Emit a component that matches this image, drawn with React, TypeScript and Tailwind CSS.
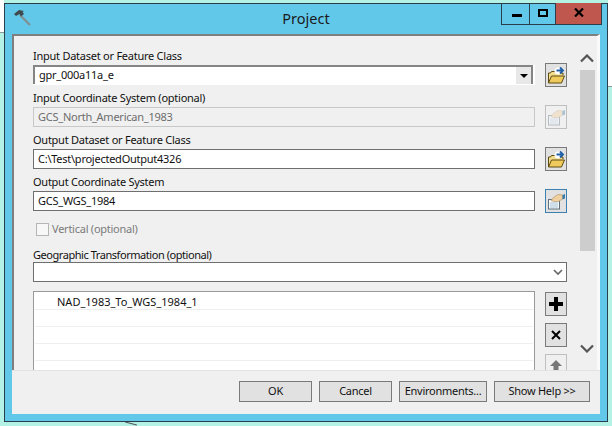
import type { ReactNode } from 'react'

function FolderIcon() {
  return (
    <svg width="17" height="18" viewBox="0 0 17 18">
      <path d="M.5 17V7h2l1-1.500h3.500l1 1.500h7v2" fill="#f3dc8c" stroke="#5e4c12" strokeWidth="1" />
      <path d="M.5 17 3.500 10H16.500l-3 7Z" fill="#efca5c" stroke="#5e4c12" strokeWidth="1" />
      <circle cx="10" cy="5" r="3.500" fill="#fff" />
      <path d="M8.500 4.500h6M12 1.500l3 3-3 3" fill="none" stroke="#1f5fa8" strokeWidth="1.800" />
    </svg>
  )
}

function HandIcon({ faded = false }: { faded?: boolean }) {
  return (
    <svg width="18" height="18" viewBox="0 0 18 18" className={faded ? 'opacity-40' : ''}>
      <rect x="1.500" y="7.500" width="11" height="9.500" fill="#f4f8fb" stroke="#5f6f7c" />
      <path d="M3 11h8M3 13h8M3 15h8" stroke="#a9c3d8" />
      <path d="M4 8.500 7 5l4-2.500 4.500.5V7l-4 2.500H7Z" fill="#f0cfa0" stroke="#b08f5c" strokeWidth="0.600" />
      <path d="M15.500 3 18 2v4.500l-2.500 1Z" fill="#3b7ca8" />
    </svg>
  )
}

function IconButton({ children, tone = 'normal' }: { children: ReactNode; tone?: 'normal' | 'focus' | 'off' }) {
  const border = tone === 'focus' ? 'border-[#3c7fb1]' : tone === 'off' ? 'border-[#bfbfbf]' : 'border-[#7a7a7a]'
  const fill = tone === 'off' ? 'bg-[#f0f0f0]' : 'bg-[#e1e1e1]'
  return (
    <div className={`flex h-[24px] w-[22px] shrink-0 items-center justify-center border ${border} ${fill}`}>
      {children}
    </div>
  )
}

function Field({ label, value, disabled, combo, children }: {
  label: string
  value: string
  disabled?: boolean
  combo?: boolean
  children: ReactNode
}) {
  return (
    <div className="flex flex-col">
      <div className="h-[15px] text-[11px] leading-[15px] text-[#111]">{label}</div>
      <div className="flex h-[24px] items-center gap-[10px]">
        <div className={`h-[20px] w-[502px] shrink-0 bg-white ${combo ? 'pb-[1px] pr-[2px]' : ''}`}>
          <div
            className={`flex h-full items-center justify-between border pl-[4px] text-[11px] ${
              disabled
                ? 'border-[#c8c8c8] bg-[#f0f0f0] text-[#6d6d6d]'
                : combo
                  ? 'border-x-2 border-b-0 border-t-2 border-[#858585] pl-[3px] text-[#111]'
                  : 'border-[#6f6f6f] bg-white text-[#111]'
            }`}
          >
            <span>{value}</span>
            {combo && (
              <span className="flex h-full w-[15px] items-center justify-center bg-[#e8e8e8]">
                <span className="h-0 w-0 border-x-[4px] border-t-[4px] border-x-transparent border-t-black" />
              </span>
            )}
          </div>
        </div>
        {children}
      </div>
    </div>
  )
}

export default function App() {
  return (
    <div className='relative h-[426px] w-[612px] overflow-hidden bg-[#b5f2e6] px-[4px] pt-[3px] font-["Noto_Sans","Open_Sans",sans-serif] tracking-[-0.25px]'>
      {/* desktop behind the dialog */}
      <div className="absolute left-0 top-0 h-[33px] w-[4px] border-b border-[#8a9a98] bg-white" />
      <div className="absolute right-0 top-0 h-[87px] w-[4px] border-b border-[#8a9a98] bg-white" />
      <div className="absolute left-[125px] top-[423px] h-[1px] w-[12px] rotate-[15deg] bg-[#555]" />

      <div className="relative flex h-[419px] w-[604px] flex-col border border-[#2a3f4b] bg-[#62c8ea] px-[7px] pb-[7px]">
        <div className="relative flex h-[30px] shrink-0 items-center justify-center text-[14.500px] tracking-normal text-[#1a1a1a]">
          <svg width="17" height="17" viewBox="0 0 17 17" className="absolute left-[2px] top-[5px]">
            <path d="M6 6 16 16" stroke="#808e92" strokeWidth="2.200" />
            <path d="M0 5 5 1l5 1-1.500 1 1.500 2-3 2.500L5.500 5 2 7Z" fill="#3e4a4e" />
          </svg>
          <span>Project</span>
          <div className="absolute right-[-2px] top-[-1px] flex h-[22px] border border-t-0 border-[#2a3f4b]">
            <div className="flex w-[27px] items-end justify-center pb-[7px] pl-[2px]">
              <span className="h-[3px] w-[10px] bg-black" />
            </div>
            <div className="flex w-[26px] items-center justify-center border-l border-[#2a3f4b]">
              <span className="mb-[2px] h-[8px] w-[10px] border-2 border-black" />
            </div>
            <div className="flex w-[46px] items-center justify-center border-l border-[#2a3f4b] bg-[#c0574f]">
              <svg width="10" height="9" viewBox="0 0 10 9" className="mb-[2px]">
                <path d="M1 .5 9 8.500M9 .5 1 8.500" stroke="#000" strokeWidth="2.200" />
              </svg>
            </div>
          </div>
        </div>

        <div className="relative flex min-h-0 flex-1 flex-col bg-[#f0f0f0]">
          <div className="flex min-h-0 flex-1 overflow-hidden border-l-2 border-r-[3px] border-t-2 border-[#7f7f7f] border-r-[#fafafa]">
            <div className="flex w-[553px] shrink-0 flex-col pl-[19px] pt-[12px]">
              <div className="flex flex-col gap-[3px]">
                <Field label="Input Dataset or Feature Class" value="gpr_000a11a_e" combo>
                  <IconButton><FolderIcon /></IconButton>
                </Field>
                <Field label="Input Coordinate System (optional)" value="GCS_North_American_1983" disabled>
                  <IconButton tone="off"><HandIcon faded /></IconButton>
                </Field>
                <Field label="Output Dataset or Feature Class" value="C:\Test\projectedOutput4326">
                  <IconButton><FolderIcon /></IconButton>
                </Field>
                <Field label="Output Coordinate System" value="GCS_WGS_1984">
                  <IconButton tone="focus"><HandIcon /></IconButton>
                </Field>
              </div>
              <div className="ml-[3px] mt-[10px] flex h-[13px] shrink-0 items-center gap-[3px] text-[11px] text-[#7b7b7b]">
                <span className="h-[13px] w-[13px] border border-[#b5b5b5] bg-[#f7f7f7]" />
                Vertical (optional)
              </div>
              <div className="mt-[12px] h-[14px] shrink-0 text-[11px] leading-[14px] tracking-[-0.45px] text-[#111]">Geographic Transformation (optional)</div>
              <div className="flex h-[20px] w-[534px] shrink-0 items-center justify-end border border-[#6f6f6f] bg-white pr-[3px]">
                <svg width="10" height="7" viewBox="0 0 10 7">
                  <path d="M1 1 5 5 9 1" fill="none" stroke="#666" strokeWidth="1.600" />
                </svg>
              </div>
              <div className="mt-[9px] flex shrink-0 gap-[10px]">
                <div className="h-[90px] w-[502px] border border-b-0 border-[#999] bg-white px-[1px] text-[11px] tracking-normal text-[#111]">
                  <div className="h-[18px] border-b border-[#eee] pl-[22px] leading-[20px]">NAD_1983_To_WGS_1984_1</div>
                  {[0, 1, 2].map(i => (
                    <div key={i} className="h-[17px] border-b border-[#eee]" />
                  ))}
                </div>
                <div className="mt-[1px] flex flex-col gap-[7px]">
                  <IconButton>
                    <svg width="16" height="16" viewBox="0 0 16 16"><path d="M8 1v14M1 8h14" stroke="#000" strokeWidth="4" /></svg>
                  </IconButton>
                  <IconButton>
                    <svg width="12" height="12" viewBox="0 0 12 12"><path d="M2 2 10 10M10 2 2 10" stroke="#000" strokeWidth="2" /></svg>
                  </IconButton>
                  <IconButton tone="off">
                    <svg width="14" height="14" viewBox="0 0 14 14"><path d="M7 1 13 7H9.500V14H4.500V7H1Z" fill="#777" /></svg>
                  </IconButton>
                </div>
              </div>
            </div>
            <div className="ml-[12px] flex w-[16px] shrink-0 flex-col items-center pt-[18px]">
              <svg width="14" height="9" viewBox="0 0 14 9"><path d="M1 7.500 7 1.500l6 6" fill="none" stroke="#555" strokeWidth="2.200" /></svg>
              <div className="mt-[7px] h-[181px] w-[15px] shrink-0 bg-[#cdcdcd]" />
              <svg width="14" height="9" viewBox="0 0 14 9" className="mt-[93px] shrink-0"><path d="M1 1.500 7 7.500l6-6" fill="none" stroke="#555" strokeWidth="2.200" /></svg>
            </div>
          </div>
          <div className="flex h-[44px] shrink-0 items-start justify-end gap-[7px] border-t border-[#e3e3e3] pr-[10px] pt-[10px] text-[11px] text-[#111]">
            <div className="flex h-[21px] w-[73px] items-center justify-center border border-[#7a7a7a] bg-[#e1e1e1]">OK</div>
            <div className="flex h-[21px] w-[73px] items-center justify-center border border-[#7a7a7a] bg-[#e1e1e1]">Cancel</div>
            <div className="flex h-[21px] w-[88px] items-center justify-center border border-[#7a7a7a] bg-[#e1e1e1]">Environments...</div>
            <div className="flex h-[21px] w-[96px] items-center justify-center border border-[#7a7a7a] bg-[#e1e1e1]">Show Help &gt;&gt;</div>
          </div>
        </div>
      </div>
    </div>
  )
}
